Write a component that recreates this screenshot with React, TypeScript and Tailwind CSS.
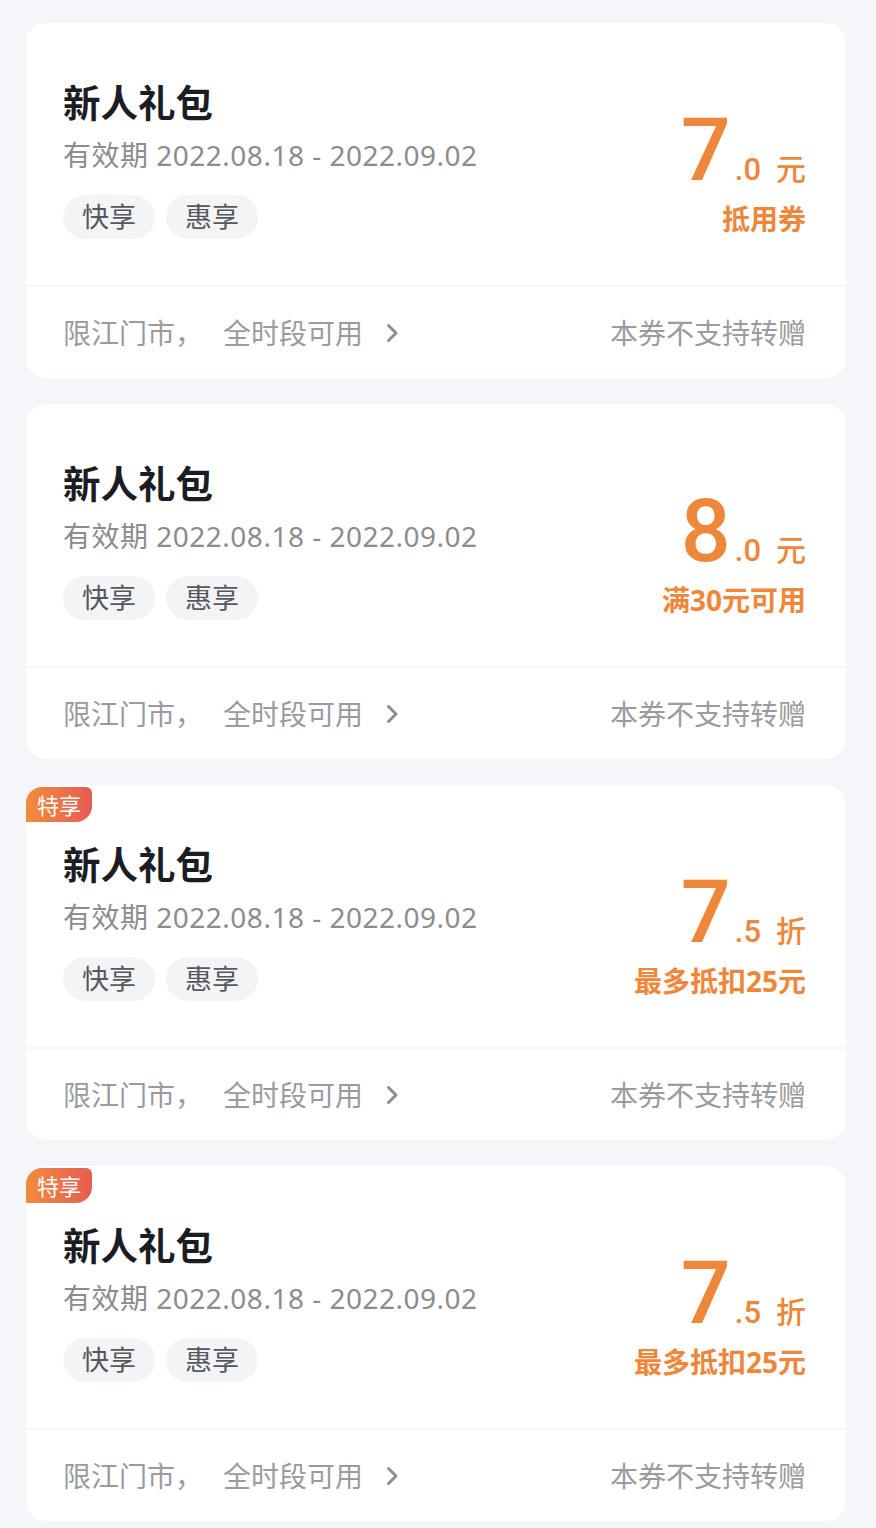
const coupons = [
  { big: "7", small: ".0", unit: "元", sub: "抵用券", badge: false },
  { big: "8", small: ".0", unit: "元", sub: "满30元可用", badge: false },
  { big: "7", small: ".5", unit: "折", sub: "最多抵扣25元", badge: true },
  { big: "7", small: ".5", unit: "折", sub: "最多抵扣25元", badge: true },
];

function Chevron() {
  return (
    <svg width="14" height="22" viewBox="0 0 14 22" fill="none" className="ml-[22px]">
      <path d="M3.5 3.5l7.5 7.5-7.5 7.5" stroke="#8c8d91" strokeWidth="3" strokeLinecap="round" strokeLinejoin="round" />
    </svg>
  );
}

function Coupon({ big, small, unit, sub, badge }: (typeof coupons)[number]) {
  return (
    <div className="relative h-[355px] rounded-[20px] bg-white">
      {badge && (
        <div className="absolute left-0 top-[2px] flex h-[35px] w-[66px] items-center justify-center rounded-tl-[16px] rounded-tr-[6px] rounded-br-[16px] bg-gradient-to-r from-[#f28b3a] to-[#e55c52] text-[22px] leading-none text-white">
          特享
        </div>
      )}

      {/* top part */}
      <div className="flex h-[262px] justify-between pl-[37px] pr-[40px]">
        <div className="pt-[58px]">
          <h2 className="text-[37.5px] font-bold leading-[44px] text-[#1c1d24]">新人礼包</h2>
          <p className="mt-[12px] text-[28px] leading-[36px] tracking-[0.5px] text-[#8b8c90]">有效期 2022.08.18 - 2022.09.02</p>
          <div className="mt-[22px] flex gap-[11px]">
            <span className="flex h-[44px] items-center rounded-full bg-[#f3f4f6] px-[19px] text-[27px] text-[#56585e]">快享</span>
            <span className="flex h-[44px] items-center rounded-full bg-[#f3f4f6] px-[19px] text-[27px] text-[#56585e]">惠享</span>
          </div>
        </div>

        <div className="flex flex-col items-end pt-[83px] text-[#ef873a]">
          <div className="flex items-baseline font-medium">
            <span className="font-['Roboto'] text-[88px] leading-none">{big}</span>
            <span className="ml-[4px] font-['Roboto'] text-[31px] leading-none">{small}</span>
            <span className="ml-[15px] text-[30px] leading-none">{unit}</span>
          </div>
          <div className="mt-[8px] text-[28px] font-bold leading-[34px]">{sub}</div>
        </div>
      </div>

      {/* bottom part */}
      <div className="flex h-[93px] items-center justify-between border-t-2 border-[#f5f6f8] pl-[37px] pr-[40px] text-[28px] text-[#9a9b9f]">
        <div className="flex items-center">
          <span>限江门市，</span>
          <span className="ml-[20px]">全时段可用</span>
          <Chevron />
        </div>
        <span>本券不支持转赠</span>
      </div>
    </div>
  );
}

export default function App() {
  return (
    <div
      className="min-h-[1528px] bg-[#f4f6f9] pl-[26px] pr-[30px] pt-[23px]"
      style={{ fontFamily: '"Noto Sans", "Noto Sans CJK SC", sans-serif' }}
    >
      <div className="flex flex-col gap-[26px]">
        {coupons.map((c, i) => (
          <Coupon key={i} {...c} />
        ))}
      </div>
    </div>
  );
}
